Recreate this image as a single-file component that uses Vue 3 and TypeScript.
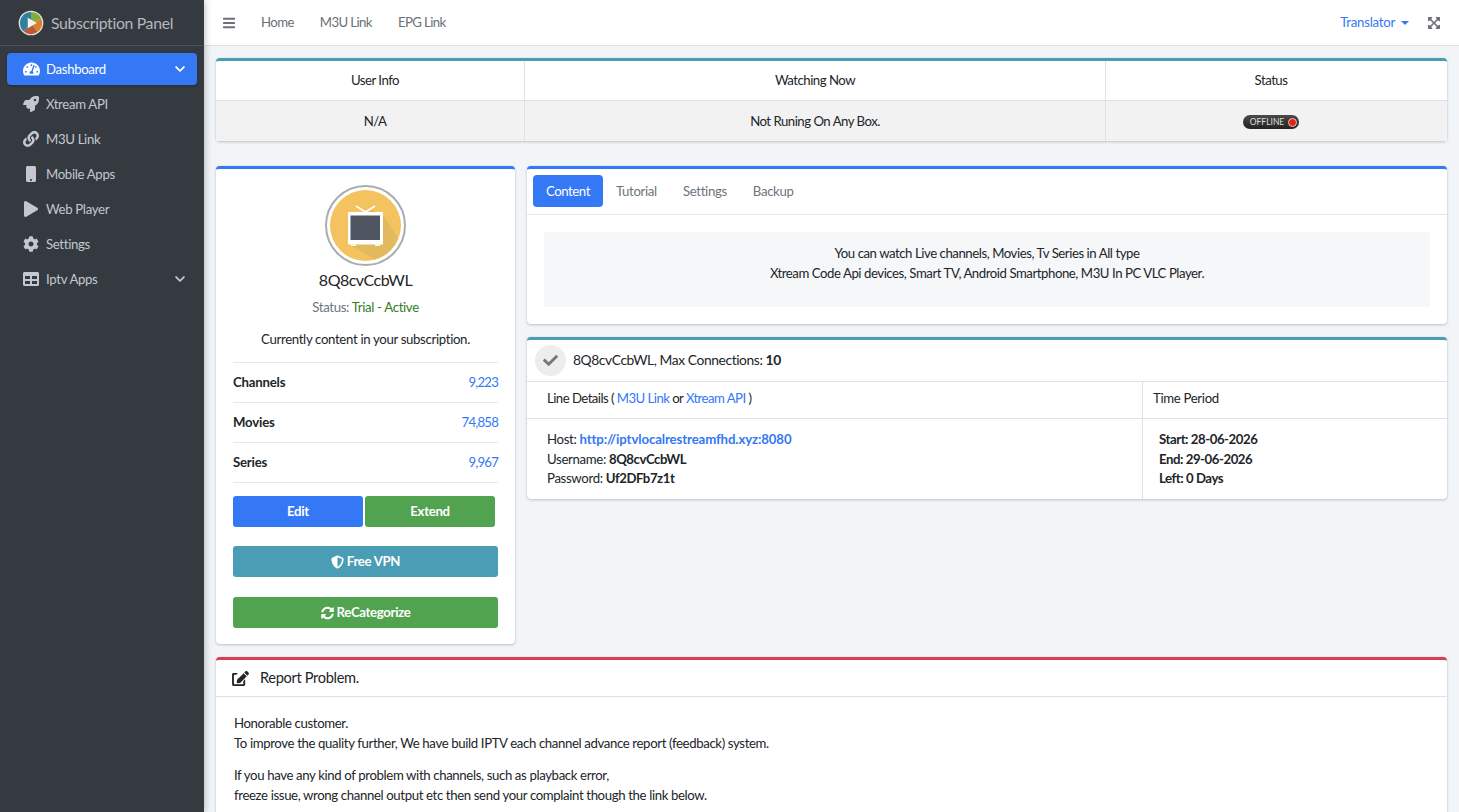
<script setup lang="ts">
const icons: Record<string, { box: string; d: string }> = {
  gauge: { box: '0 0 576 512', d: 'M288 32C128.94 32 0 160.94 0 320c0 52.8 14.25 102.26 39.06 144.8 5.61 9.62 16.3 15.2 27.44 15.2h443c11.14 0 21.83-5.58 27.44-15.2C561.75 422.26 576 372.8 576 320c0-159.06-128.94-288-288-288zm0 64c14.71 0 26.58 10.13 30.32 23.65-1.11 2.26-2.64 4.23-3.45 6.67l-9.22 27.67c-5.13 3.49-10.97 6.01-17.64 6.01-17.67 0-32-14.33-32-32S270.33 96 288 96zM96 384c-17.67 0-32-14.33-32-32s14.33-32 32-32 32 14.33 32 32-14.33 32-32 32zm48-160c-17.67 0-32-14.33-32-32s14.33-32 32-32 32 14.33 32 32-14.33 32-32 32zm246.77-72.41l-61.33 184C343.13 347.33 352 364.54 352 384c0 11.72-3.38 22.55-8.88 32H232.88c-5.5-9.45-8.88-20.28-8.88-32 0-33.94 26.5-61.43 59.9-63.59l61.34-184.01c4.17-12.56 17.73-19.45 30.36-15.17 12.57 4.19 19.35 17.79 15.17 30.36zm14.66 57.2l15.52-46.55c3.47-1.29 7.13-2.23 11.05-2.23 17.67 0 32 14.33 32 32s-14.33 32-32 32c-11.38-.01-20.89-6.28-26.57-15.22zM480 384c-17.67 0-32-14.33-32-32s14.33-32 32-32 32 14.33 32 32-14.33 32-32 32z' },
  rocket: { box: '0 0 512 512', d: 'M505.12 19.09c-1.19-5.53-6.66-11-12.21-12.19C460.72 0 435.51 0 410.41 0 307.18 0 245.27 55.2 199.05 128H94.84c-16.35.02-35.56 11.88-42.89 26.48L2.52 253.3A28.4 28.4 0 0 0 0 264a24 24 0 0 0 24 24h103.81l-22.47 22.47c-11.37 11.36-13 32.26 0 45.25l50.9 50.91c11.16 11.18 32.16 13.15 45.28 0l22.48-22.47V488a24 24 0 0 0 24 24 28.56 28.56 0 0 0 10.71-2.52l98.73-49.39c14.63-7.29 26.51-26.5 26.51-42.85V312.8c72.6-46.31 128.03-108.41 128.03-211.1.01-25.2.01-50.4-6.95-82.61zM384.04 168a40 40 0 1 1 40.01-40 40.02 40.02 0 0 1-40.01 40z' },
  link: { box: '0 0 512 512', d: 'M326.612 185.391c59.747 59.809 58.927 155.698.36 214.59-.11.12-.24.25-.36.37l-67.2 67.2c-59.27 59.27-155.699 59.262-214.96 0-59.27-59.26-59.27-155.7 0-214.96l37.106-37.106c9.84-9.84 26.786-3.3 27.294 10.606.648 17.722 3.826 35.527 9.69 52.721 1.986 5.822.567 12.262-3.783 16.612l-13.087 13.087c-28.026 28.026-28.905 73.66-1.155 101.96 28.024 28.579 74.086 28.749 102.325.51l67.2-67.19c28.191-28.191 28.073-73.757 0-101.83-3.701-3.694-7.429-6.564-10.341-8.569a16.037 16.037 0 0 1-6.947-12.606c-.396-10.567 3.348-21.456 11.698-29.806l21.054-21.055c5.521-5.521 14.182-6.199 20.584-1.731a152.482 152.482 0 0 1 20.522 17.197zM467.547 44.449c-59.261-59.262-155.69-59.27-214.96 0l-67.2 67.2c-.12.12-.25.25-.36.37-58.566 58.892-59.387 154.781.36 214.59a152.454 152.454 0 0 0 20.521 17.196c6.402 4.468 15.064 3.789 20.584-1.731l21.054-21.055c8.35-8.35 12.094-19.239 11.698-29.806a16.037 16.037 0 0 0-6.947-12.606c-2.912-2.005-6.64-4.875-10.341-8.569-28.073-28.073-28.191-73.639 0-101.83l67.2-67.19c28.239-28.239 74.3-28.069 102.325.51 27.75 28.3 26.872 73.934-1.155 101.96l-13.087 13.087c-4.35 4.35-5.769 10.79-3.783 16.612 5.864 17.194 9.042 34.999 9.69 52.721.509 13.906 17.454 20.446 27.294 10.606l37.106-37.106c59.271-59.259 59.271-155.699.001-214.959z' },
  mobile: { box: '0 0 320 512', d: 'M272 0H48C21.5 0 0 21.5 0 48v416c0 26.5 21.5 48 48 48h224c26.5 0 48-21.5 48-48V48c0-26.5-21.5-48-48-48zM160 480c-17.7 0-32-14.3-32-32s14.3-32 32-32 32 14.3 32 32-14.3 32-32 32z' },
  play: { box: '0 0 448 512', d: 'M424.4 214.7L72.4 6.6C43.8-10.3 0 6.1 0 47.9V464c0 37.5 40.7 60.1 72.4 41.3l352-208c31.4-18.5 31.5-64.1 0-82.6z' },
  cog: { box: '0 0 512 512', d: 'M487.4 315.7l-42.6-24.6c4.3-23.2 4.3-47 0-70.2l42.6-24.6c4.9-2.8 7.1-8.6 5.5-14-11.1-35.6-30-67.8-54.7-94.6-3.8-4.1-10-5.1-14.8-2.3L380.8 110c-17.9-15.4-38.5-27.3-60.8-35.1V25.8c0-5.6-3.9-10.5-9.4-11.7-36.7-8.2-74.3-7.8-109.2 0-5.5 1.2-9.4 6.1-9.4 11.7V75c-22.2 7.9-42.8 19.8-60.8 35.1L88.7 85.5c-4.9-2.8-11-1.9-14.8 2.3-24.7 26.7-43.6 58.9-54.7 94.6-1.7 5.4.6 11.2 5.5 14L67.3 221c-4.3 23.2-4.3 47 0 70.2l-42.6 24.6c-4.9 2.8-7.1 8.6-5.5 14 11.1 35.6 30 67.8 54.7 94.6 3.8 4.1 10 5.1 14.8 2.3l42.6-24.6c17.9 15.4 38.5 27.3 60.8 35.1v49.2c0 5.6 3.9 10.5 9.4 11.7 36.7 8.2 74.3 7.8 109.2 0 5.5-1.2 9.4-6.1 9.4-11.7v-49.2c22.2-7.9 42.8-19.8 60.8-35.1l42.6 24.6c4.9 2.8 11 1.9 14.8-2.3 24.7-26.7 43.6-58.9 54.7-94.6 1.5-5.5-.7-11.3-5.6-14.1zM256 336c-44.1 0-80-35.9-80-80s35.9-80 80-80 80 35.9 80 80-35.9 80-80 80z' },
  table: { box: '0 0 512 512', d: 'M464 32H48C21.49 32 0 53.49 0 80v352c0 26.51 21.49 48 48 48h416c26.51 0 48-21.49 48-48V80c0-26.51-21.49-48-48-48zM224 416H64v-96h160v96zm0-160H64v-96h160v96zm224 160H288v-96h160v96zm0-160H288v-96h160v96z' },
  chevron: { box: '0 0 448 512', d: 'M207.029 381.476L12.686 187.132c-9.373-9.373-9.373-24.569 0-33.941l22.667-22.667c9.357-9.357 24.522-9.375 33.901-.04L224 284.505l154.745-154.021c9.379-9.335 24.544-9.317 33.901.04l22.667 22.667c9.373 9.373 9.373 24.569 0 33.941L240.971 381.476c-9.373 9.372-24.569 9.372-33.942 0z' },
  bars: { box: '0 0 448 512', d: 'M16 132h416c8.837 0 16-7.163 16-16V76c0-8.837-7.163-16-16-16H16C7.163 60 0 67.163 0 76v40c0 8.837 7.163 16 16 16zm0 160h416c8.837 0 16-7.163 16-16v-40c0-8.837-7.163-16-16-16H16c-8.837 0-16 7.163-16 16v40c0 8.837 7.163 16 16 16zm0 160h416c8.837 0 16-7.163 16-16v-40c0-8.837-7.163-16-16-16H16c-8.837 0-16 7.163-16 16v40c0 8.837 7.163 16 16 16z' },
  expand: { box: '0 0 448 512', d: 'M448 344v112a23.94 23.94 0 0 1-24 24H312c-21.39 0-32.09-25.9-17-41l36.2-36.2L224 295.6 116.77 402.9 153 439c15.09 15.1 4.39 41-17 41H24a23.94 23.94 0 0 1-24-24V344c0-21.4 25.89-32.1 41-17l36.19 36.2L184.46 256 77.18 148.7 41 185c-15.1 15.1-41 4.4-41-17V56a23.94 23.94 0 0 1 24-24h112c21.39 0 32.09 25.9 17 41l-36.2 36.2L224 216.4l107.23-107.3L295 73c-15.09-15.1-4.39-41 17-41h112a23.94 23.94 0 0 1 24 24v112c0 21.4-25.89 32.1-41 17l-36.19-36.2L263.54 256l107.28 107.3L407 327.1c15.1-15.2 41-4.5 41 16.9z' },
  shield: { box: '0 0 512 512', d: 'M466.5 83.7l-192-80a48.15 48.15 0 0 0-36.9 0l-192 80C27.7 91.1 16 108.6 16 128c0 198.5 114.5 335.7 221.5 380.3 11.8 4.9 25.1 4.9 36.9 0C360.1 472.6 496 349.3 496 128c0-19.4-11.7-36.9-29.5-44.3zM256.1 446.3l-.1-381 175.9 73.3c-3.3 151.4-82.1 261.1-175.8 307.7z' },
  sync: { box: '0 0 512 512', d: 'M370.72 133.28C339.458 104.008 298.888 87.962 255.848 88c-77.458.068-144.328 53.178-162.791 126.85-1.344 5.363-6.122 9.15-11.651 9.15H24.103c-7.498 0-13.194-6.807-11.807-14.176C33.933 94.924 134.813 8 256 8c66.448 0 126.791 26.136 171.315 68.685L463.03 40.97C478.149 25.851 504 36.559 504 57.941V192c0 13.255-10.745 24-24 24H345.941c-21.382 0-32.09-25.851-16.971-40.971l41.75-41.749zM32 296h134.059c21.382 0 32.09 25.851 16.971 40.971l-41.75 41.75c31.262 29.273 71.835 45.319 114.876 45.28 77.418-.07 144.315-53.144 162.787-126.849 1.344-5.363 6.122-9.15 11.651-9.15h57.304c7.498 0 13.194 6.807 11.807 14.176C478.067 417.076 377.187 504 256 504c-66.448 0-126.791-26.136-171.315-68.685L48.97 471.03C33.851 486.149 8 475.441 8 454.059V320c0-13.255 10.745-24 24-24z' },
  check: { box: '0 0 512 512', d: 'M173.898 439.404l-166.4-166.4c-9.997-9.997-9.997-26.206 0-36.204l36.203-36.204c9.997-9.998 26.207-9.998 36.204 0L192 312.69 432.095 72.596c9.997-9.997 26.207-9.997 36.204 0l36.203 36.204c9.997 9.997 9.997 26.206 0 36.204l-294.4 294.401c-9.998 9.997-26.207 9.997-36.204-.001z' },
  edit: { box: '0 0 576 512', d: 'M402.6 83.2l90.2 90.2c3.8 3.8 3.8 10 0 13.8L274.4 405.6l-92.8 10.3c-12.4 1.4-22.9-9.1-21.5-21.5l10.3-92.8L388.8 83.2c3.8-3.8 10-3.8 13.8 0zm162-22.9l-48.8-48.8c-15.2-15.2-39.9-15.2-55.2 0l-35.4 35.4c-3.8 3.8-3.8 10 0 13.8l90.2 90.2c3.8 3.8 10 3.8 13.8 0l35.4-35.4c15.2-15.3 15.2-40 0-55.2zM384 346.2V448H64V128h73.1c3.2 0 6.2-1.3 8.5-3.5l40-40c7.6-7.6 2.2-20.5-8.5-20.5H48C21.5 64 0 85.5 0 112v352c0 26.5 21.5 48 48 48h352c26.5 0 48-21.5 48-48V306.2c0-10.7-12.9-16-20.5-8.5l-40 40c-2.2 2.3-3.5 5.3-3.5 8.5z' },
}

const menu = [
  { label: 'Dashboard', icon: 'gauge', active: true, more: true },
  { label: 'Xtream API', icon: 'rocket' },
  { label: 'M3U Link', icon: 'link' },
  { label: 'Mobile Apps', icon: 'mobile' },
  { label: 'Web Player', icon: 'play' },
  { label: 'Settings', icon: 'cog' },
  { label: 'Iptv Apps', icon: 'table', more: true },
]

const topLinks = ['Home', 'M3U Link', 'EPG Link']
const tabs = ['Content', 'Tutorial', 'Settings', 'Backup']
const stats = [
  { label: 'Channels', value: '9,223' },
  { label: 'Movies', value: '74,858' },
  { label: 'Series', value: '9,967' },
]
</script>

<template>
  <div class="shell">
    <aside class="sidebar">
      <div class="brand">
        <svg class="logo" viewBox="0 0 40 40">
          <circle cx="20" cy="20" r="19" fill="#e9e6df" />
          <path d="M20 20 L20 3 A17 17 0 0 1 36 14 Z" fill="#7fae3c" />
          <path d="M20 20 L36 14 A17 17 0 0 1 30 34 Z" fill="#d9812f" />
          <path d="M20 20 L30 34 A17 17 0 0 1 9 33 Z" fill="#b9583a" />
          <path d="M20 20 L9 33 A17 17 0 0 1 3 20 A17 17 0 0 1 20 3 Z" fill="#2f7f9f" />
          <path d="M15 12 L29 20 L15 28 Z" fill="#f2f2ee" />
        </svg>
        <span>Subscription Panel</span>
      </div>
      <nav class="menu">
        <a v-for="item in menu" :key="item.label" class="menu-item" :class="{ active: item.active }">
          <span class="menu-icon">
            <svg class="icon" :viewBox="icons[item.icon].box"><path :d="icons[item.icon].d" /></svg>
          </span>
          <span class="menu-label">{{ item.label }}</span>
          <svg v-if="item.more" class="icon chevron" :viewBox="icons.chevron.box"><path :d="icons.chevron.d" /></svg>
        </a>
      </nav>
    </aside>

    <div class="main">
      <header class="topbar">
        <svg class="icon bars" :viewBox="icons.bars.box"><path :d="icons.bars.d" /></svg>
        <a v-for="l in topLinks" :key="l" class="top-link">{{ l }}</a>
        <span class="spacer" />
        <a class="translator">Translator<i class="caret" /></a>
        <svg class="icon expand" :viewBox="icons.expand.box"><path :d="icons.expand.d" /></svg>
      </header>

      <main class="content">
        <section class="card teal info-table">
          <div class="info-row head">
            <div>User Info</div>
            <div>Watching Now</div>
            <div>Status</div>
          </div>
          <div class="info-row body">
            <div>N/A</div>
            <div>Not Runing On Any Box.</div>
            <div>
              <span class="offline">OFFLINE<i class="led" /></span>
            </div>
          </div>
        </section>

        <div class="columns">
          <section class="card blue profile">
            <svg class="avatar" viewBox="0 0 81 81">
              <circle cx="40.5" cy="40.5" r="39.5" fill="#fff" stroke="#a9adb0" stroke-width="2" />
              <circle cx="40.5" cy="40.5" r="35.5" fill="#f4c25f" />
              <path d="M45 24 L58 30 L73 53 A35.5 35.5 0 0 1 50 74.5 L25 60 Z" fill="#e3b95f" />
              <path d="M40.5 27 L31 21 M40.5 27 L50 21" stroke="#fff" stroke-width="1.6" />
              <rect x="23" y="27" width="35" height="32.5" fill="#fff" />
              <rect x="25.5" y="30.5" width="29.5" height="24.5" fill="#4f5662" />
              <rect x="26" y="59.5" width="5" height="1.4" fill="#fff" />
              <rect x="50" y="59.5" width="5" height="1.4" fill="#fff" />
            </svg>
            <h3 class="username">8Q8cvCcbWL</h3>
            <p class="status">Status: <span>Trial - Active</span></p>
            <p class="blurb">Currently content in your subscription.</p>
            <ul class="stats">
              <li v-for="s in stats" :key="s.label">
                <b>{{ s.label }}</b>
                <a>{{ s.value }}</a>
              </li>
            </ul>
            <div class="pair">
              <a class="btn primary">Edit</a>
              <a class="btn success">Extend</a>
            </div>
            <a class="btn info wide vpn">
              <svg class="icon" :viewBox="icons.shield.box"><path :d="icons.shield.d" /></svg>
              Free VPN
            </a>
            <a class="btn success wide">
              <svg class="icon" :viewBox="icons.sync.box"><path :d="icons.sync.d" /></svg>
              ReCategorize
            </a>
          </section>

          <div class="right">
            <section class="card blue tabs-card">
              <div class="tabs">
                <a v-for="(t, i) in tabs" :key="t" class="tab" :class="{ current: i === 0 }">{{ t }}</a>
              </div>
              <div class="tab-body">
                <div class="callout">
                  You can watch Live channels, Movies, Tv Series in All type<br />
                  Xtream Code Api devices, Smart TV, Android Smartphone, M3U In PC VLC Player.
                </div>
              </div>
            </section>

            <section class="card teal details">
              <div class="details-head">
                <span class="tick">
                  <svg class="icon" :viewBox="icons.check.box"><path :d="icons.check.d" /></svg>
                </span>
                <span>8Q8cvCcbWL, Max Connections: <b>10</b></span>
              </div>
              <div class="details-row labels">
                <div>Line Details ( <a>M3U Link</a> or <a>Xtream API</a> )</div>
                <div>Time Period</div>
              </div>
              <div class="details-row values">
                <div>
                  Host: <a class="host">http://iptvlocalrestreamfhd.xyz:8080</a><br />
                  Username: <b>8Q8cvCcbWL</b><br />
                  Password: <b>Uf2DFb7z1t</b>
                </div>
                <div>
                  <b>Start: 28-06-2026</b><br />
                  <b>End: 29-06-2026</b><br />
                  <b>Left: 0 Days</b>
                </div>
              </div>
            </section>
          </div>
        </div>

        <section class="card red report">
          <div class="report-head">
            <svg class="icon" :viewBox="icons.edit.box"><path :d="icons.edit.d" /></svg>
            <span>Report Problem.</span>
          </div>
          <div class="report-body">
            <p>Honorable customer.<br />To improve the quality further, We have build IPTV each channel advance report (feedback) system.</p>
            <p>If you have any kind of problem with channels, such as playback error,<br />freeze issue, wrong channel output etc then send your complaint though the link below.</p>
          </div>
        </section>
      </main>
    </div>
  </div>
</template>

<style>
html,
body {
  margin: 0;
  height: 100%;
  overflow: hidden;
}
</style>

<style scoped>
/* Lato is wider than the panel's font, so it runs small with tightened tracking. */
.shell {
  display: flex;
  height: 812px;
  overflow: hidden;
  font: 13.2px/19.5px Lato, 'Noto Sans', sans-serif;
  letter-spacing: -0.33px;
  color: #212529;
  background: #f2f5f7;
}

.icon {
  display: block;
  fill: currentColor;
}

.sidebar {
  flex: 0 0 204px;
  background: #343a40;
  color: #c2c7d0;
  box-shadow: 0 0 8px rgba(0, 0, 0, 0.3);
  z-index: 2;
}

.brand {
  display: flex;
  align-items: center;
  gap: 7px;
  height: 46px;
  box-sizing: border-box;
  padding-left: 18px;
  border-bottom: 1px solid #4b545c;
  font-size: 15.8px;
  color: #b4b8bd;
}

.logo {
  width: 26px;
  height: 26px;
}

.menu {
  display: flex;
  flex-direction: column;
  gap: 3px;
  padding: 7px 7px 0;
}

.menu-item {
  display: flex;
  align-items: center;
  height: 32px;
  border-radius: 4px;
  padding: 0 12px 0 15px;
}

.menu-item.active {
  background: #3478f6;
  color: #fff;
  box-shadow: 0 1px 3px rgba(0, 0, 0, 0.25);
}

.menu-icon {
  display: flex;
  justify-content: center;
  width: 18px;
  margin-right: 6px;
}

.menu-icon .icon {
  height: 16px;
  max-width: 17px;
}

.menu-label {
  flex: 1;
  padding-top: 1px;
}

.chevron {
  width: 10px;
  height: 12px;
}

.main {
  flex: 1;
  min-width: 0;
}

.topbar {
  display: flex;
  align-items: center;
  height: 46px;
  box-sizing: border-box;
  padding: 0 19px;
  background: #fff;
  border-bottom: 1px solid #dee2e6;
  color: #6c7075;
}

.bars {
  width: 12px;
  height: 14px;
  margin-right: 26px;
}

.top-link {
  margin-right: 26px;
  letter-spacing: -0.6px;
}

.spacer {
  flex: 1;
}

.translator {
  color: #3478f6;
  margin-right: 19px;
  letter-spacing: -0.25px;
}

.caret {
  display: inline-block;
  margin-left: 6px;
  vertical-align: 2px;
  border: 4px solid transparent;
  border-top-color: currentColor;
  border-bottom: 0;
}

.expand {
  width: 12px;
  height: 14px;
}

.content {
  padding: 12px 12px 0;
}

.card {
  background: #fff;
  border-radius: 4px;
  border-top: 3px solid #000;
  box-shadow: 0 0 1px rgba(0, 0, 0, 0.13), 0 1px 3px rgba(0, 0, 0, 0.2);
}

.card.teal {
  border-top-color: #4b9db5;
}

.card.blue {
  border-top-color: #3478f6;
}

.card.red {
  border-top-color: #d64050;
}

.info-row {
  display: grid;
  grid-template-columns: 308px 581px 1fr;
  text-align: center;
  letter-spacing: -0.5px;
}

.info-row > div {
  display: flex;
  align-items: center;
  justify-content: center;
  border-left: 1px solid #dee2e6;
}

.info-row > div:first-child {
  border-left: 0;
  padding-left: 10px;
}

.info-row > div:last-child {
  padding-right: 11px;
}

.info-row.head {
  height: 39px;
}

.info-row.body {
  height: 40px;
  background: #f2f2f2;
  border-top: 1px solid #dee2e6;
}

.info-row.body > div {
  padding-top: 2px;
}

.offline {
  display: inline-flex;
  align-items: center;
  gap: 4px;
  height: 14px;
  padding: 0 2px 0 7px;
  border-radius: 7px;
  background: linear-gradient(#4a4a4a, #222);
  color: #ddd;
  font-size: 8.5px;
  line-height: 14px;
  letter-spacing: 0;
}

.led {
  width: 7px;
  height: 7px;
  border-radius: 50%;
  background: #e2231a;
  border: 1.5px solid #e8c0b8;
}

.columns {
  display: flex;
  align-items: flex-start;
  gap: 12px;
  margin-top: 25px;
}

.profile {
  flex: 0 0 299px;
  box-sizing: border-box;
  height: 478px;
  padding: 16px 17px 0;
  text-align: center;
}

.avatar {
  display: block;
  width: 81px;
  height: 81px;
  margin: 0 auto;
}

.username {
  margin: 2px 0 0;
  font-size: 16px;
  line-height: 24px;
  font-weight: 400;
  letter-spacing: -0.5px;
}

.status {
  margin: 6px 0 0;
  color: #6c757d;
}

.status span {
  color: #2f7d24;
}

.blurb {
  margin: 12px 0 0;
}

.stats {
  list-style: none;
  margin: 13px 0 0;
  padding: 0;
  border-bottom: 1px solid #e6e8ea;
}

.stats li {
  display: flex;
  justify-content: space-between;
  align-items: center;
  height: 39px;
  border-top: 1px solid #e6e8ea;
}

.stats b {
  letter-spacing: -0.2px;
}

.stats a {
  color: #3478f6;
  letter-spacing: -0.8px;
}

.pair {
  display: flex;
  gap: 2px;
  margin: 13px 3px 0 0;
}

.pair .btn {
  flex: 1;
}

.btn {
  display: flex;
  align-items: center;
  justify-content: center;
  gap: 3px;
  height: 31px;
  border-radius: 3px;
  color: #fff;
  font-weight: 700;
}

.btn .icon {
  width: 13px;
  height: 14px;
}

.btn.primary {
  background: #3478f6;
}

.btn.success {
  background: #52a350;
}

.btn.info {
  background: #4b9db5;
}

.btn.wide {
  margin-top: 20px;
}

.btn.vpn {
  margin-top: 19px;
}

.right {
  flex: 1;
  min-width: 0;
  display: flex;
  flex-direction: column;
  gap: 13px;
}

.tabs {
  display: flex;
  padding: 6px 6px 7px;
  border-bottom: 1px solid #e6e8ea;
}

.tab {
  padding: 7px 13px 5.5px;
  border-radius: 4px;
  color: #6c757d;
}

.tab.current {
  background: #3478f6;
  color: #fff;
  letter-spacing: -0.45px;
}

.tab-body {
  padding: 17px;
}

.callout {
  height: 75px;
  box-sizing: border-box;
  padding: 12px 0 0;
  background: #f6f7f9;
  text-align: center;
  letter-spacing: -0.45px;
}

.details-head {
  display: flex;
  align-items: center;
  gap: 7px;
  height: 41px;
  padding-left: 8px;
  font-size: 13.8px;
  letter-spacing: -0.4px;
}

.details-head > span:last-child {
  padding-bottom: 1px;
}

.tick {
  display: flex;
  align-items: center;
  justify-content: center;
  width: 31px;
  height: 31px;
  border-radius: 50%;
  background: #ededed;
  color: #777;
}

.tick .icon {
  width: 15px;
  height: 15px;
}

.details-row {
  display: grid;
  grid-template-columns: 615px 1fr;
  border-top: 1px solid #dee2e6;
}

.details-row > div {
  padding-left: 20px;
}

.details-row > div + div {
  padding-left: 10px;
  border-left: 1px solid #dee2e6;
}

.labels > div {
  padding-top: 7px;
  height: 29px;
  letter-spacing: -0.55px;
}

.labels > div + div {
  letter-spacing: -0.33px;
}

.values > div {
  padding-top: 11px;
  padding-bottom: 10px;
}

.values b {
  letter-spacing: -0.45px;
}

.details-row.values > div + div {
  padding-left: 16px;
}

.details-row a {
  color: #3478f6;
}

.host {
  font-weight: 700;
  letter-spacing: -0.1px;
}

.report {
  margin-top: 13px;
  height: 300px;
}

.report-head {
  display: flex;
  align-items: center;
  gap: 11px;
  height: 36px;
  padding-left: 16px;
  border-bottom: 1px solid #dee2e6;
  font-size: 14.6px;
}

.report-head .icon {
  width: 17px;
  height: 15px;
}

.report-body {
  padding: 16px 18px;
  line-height: 20px;
  letter-spacing: -0.37px;
}

.report-body p {
  margin: 0 0 12px;
}
</style>
